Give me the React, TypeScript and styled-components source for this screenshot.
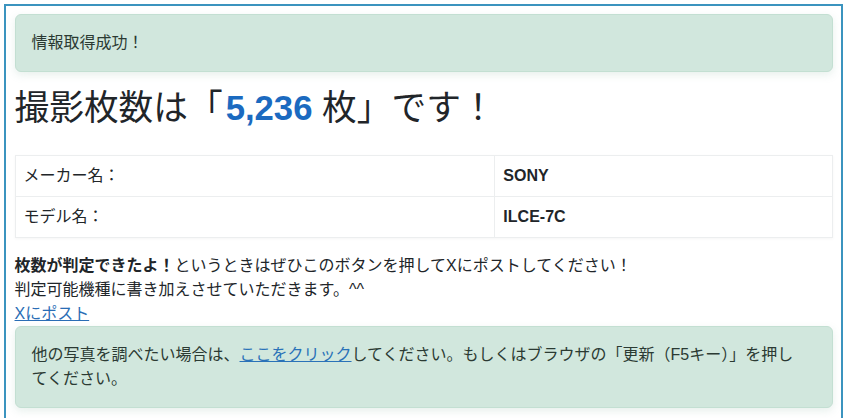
import styled, { createGlobalStyle } from "styled-components";

const GlobalStyle = createGlobalStyle`
  html, body {
    margin: 0;
    padding: 0;
    background: #ffffff;
  }
  body {
    font-family: "Liberation Sans", "Noto Sans CJK JP", sans-serif;
    font-size: 16px;
    line-height: 1.5;
    color: #212529;
  }
`;

const Frame = styled.div`
  margin: 4px 4px 0 4px;
  min-height: 460px;
  border: 2.5px solid #3b94bf;
  padding: 8px 8px 0 8.5px;
  background: #ffffff;
`;

const Alert = styled.div<{ $gap?: number }>`
  background: #d1e7dd;
  border: 1px solid #c3dfd2;
  border-radius: 6px;
  padding: 16px 28px 16px 16px;
  color: #2b3a33;
  margin-bottom: ${(p) => p.$gap ?? 16}px;
  box-shadow: 0 3px 8px rgba(120, 170, 150, 0.18);
`;

const Headline = styled.h1`
  margin: 0 0 25px;
  font-size: 34.7px;
  line-height: 1.2;
  font-weight: 400;
  color: #212529;
`;

const Count = styled.span`
  color: #1b6ac0;
  font-weight: 700;
  margin-left: 3px;
`;

const InfoTable = styled.table`
  width: 100%;
  border-collapse: collapse;
  margin-bottom: 16px;
  box-shadow: 0 1px 3px rgba(0, 0, 0, 0.04);
`;

const Cell = styled.td<{ $strong?: boolean }>`
  border: 1px solid #eceeef;
  padding: 8px 8px;
  height: 24px;
  font-weight: ${(p) => (p.$strong ? 700 : 400)};
  &:first-child {
    width: 58.7%;
  }
`;

const Note = styled.p`
  margin: 0;
`;

const PostLink = styled.a`
  display: block;
  color: #2a6db5;
  text-decoration: underline;
`;

const InlineLink = styled.a`
  color: #2a72b8;
  text-decoration: underline;
`;

export default function App() {
  const rows = [
    { label: "メーカー名：", value: "SONY" },
    { label: "モデル名：", value: "ILCE-7C" },
  ];

  return (
    <>
      <GlobalStyle />
      <Frame>
        <Alert>情報取得成功！</Alert>
        <Headline>
          撮影枚数は「<Count>5,236</Count> 枚」です！
        </Headline>
        <InfoTable>
          <tbody>
            {rows.map((row) => (
              <tr key={row.label}>
                <Cell>{row.label}</Cell>
                <Cell $strong>{row.value}</Cell>
              </tr>
            ))}
          </tbody>
        </InfoTable>
        <Note>
          <b>枚数が判定できたよ！</b>
          というときはぜひこのボタンを押してXにポストしてください！
          <br />
          判定可能機種に書き加えさせていただきます。^^
        </Note>
        <PostLink href="#">Xにポスト</PostLink>
        <Alert>
          他の写真を調べたい場合は、<InlineLink href="#">ここをクリック</InlineLink>
          してください。もしくはブラウザの「更新（F5キー）」を押してください。
        </Alert>
      </Frame>
    </>
  );
}
